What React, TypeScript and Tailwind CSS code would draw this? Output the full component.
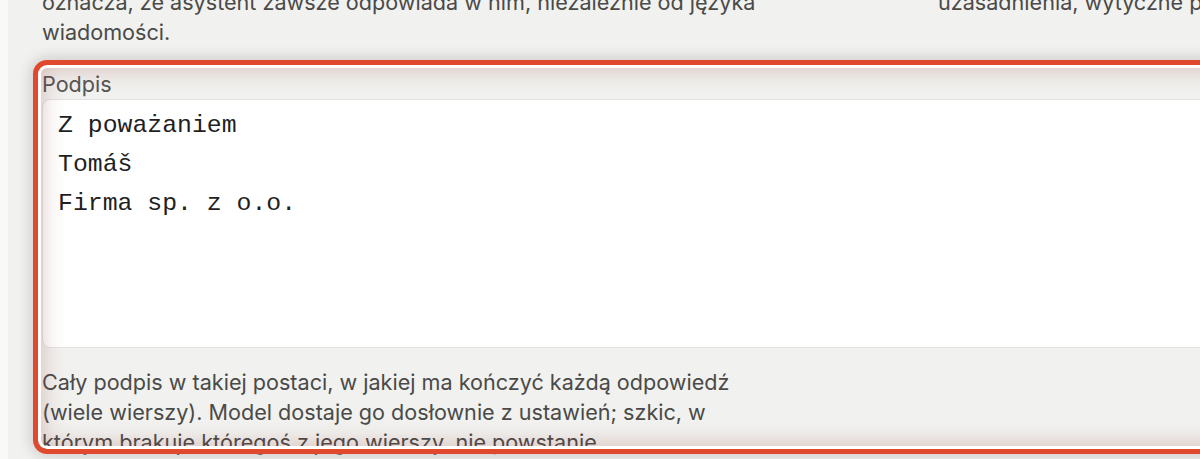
import { useState } from 'react'

const SANS = { fontFamily: 'Inter, "Noto Sans", sans-serif' }

export default function App() {
  const [signature, setSignature] = useState('Z poważaniem\nTomáš\nFirma sp. z o.o.')

  return (
    <div className="flex h-[459px] w-[1200px] overflow-hidden bg-[#f9f9f8]" style={SANS}>
      <div className="w-[8px] shrink-0" />
      <div className="flex-1 overflow-hidden bg-[#f1f1ef] pl-[34px]">
        {/* Previous fields (descriptions only visible) */}
        <div className="mt-[-13px] flex gap-[40px] text-[21.6px] leading-[30px] text-[#4a4a48]">
          <p className="w-[856px] shrink-0 pr-[128px]">
            oznacza, że asystent zawsze odpowiada w nim, niezależnie od języka wiadomości.
          </p>
          <p className="w-[700px] shrink-0">uzasadnienia, wytyczne przy odpowiedzi</p>
        </div>

        {/* Signature field */}
        <div className="relative mt-[23px] w-[1300px]">
          <label className="block text-[21.6px] leading-[28px] text-[#555553]">Podpis</label>
          <textarea
            value={signature}
            onChange={(e) => setSignature(e.target.value)}
            className="mt-[1px] block h-[249px] w-full resize-none rounded-lg border border-[#e2e2e0] bg-white px-[15px] pt-[6px] text-[24.8px] leading-[39px] text-[#1f1f1f] outline-none"
            style={{ fontFamily: '"Liberation Mono", "DejaVu Sans Mono", monospace' }}
          />
          <p className="mt-[19px] max-w-[728px] text-[21.6px] leading-[30px] text-[#4a4a48]">
            Cały podpis w takiej postaci, w jakiej ma kończyć każdą odpowiedź (wiele wierszy). Model
            dostaje go dosłownie z ustawień; szkic, w którym brakuje któregoś z jego wierszy, nie
            powstanie.
          </p>

          {/* Highlight around the field */}
          <div className="pointer-events-none absolute left-[-9px] top-[-10px] h-[394px] w-[1320px] rounded-[14px] border-[5px] border-[#e0492d] shadow-[0_0_14px_2px_rgba(0,0,0,0.16),inset_0_0_0_3px_#ffffff,inset_0_0_22px_4px_rgba(150,70,60,0.3)]" />
        </div>
      </div>
    </div>
  )
}
